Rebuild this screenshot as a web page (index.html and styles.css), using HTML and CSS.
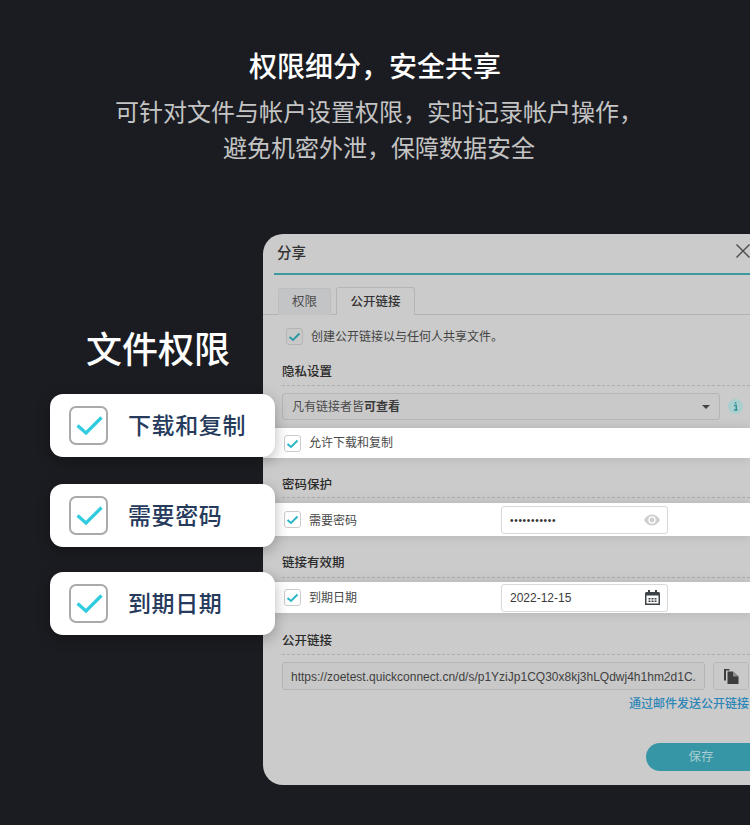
FILE: index.html
```html
<!DOCTYPE html>
<html lang="zh-CN">
<head>
<meta charset="utf-8">
<title>权限细分，安全共享</title>
<link rel="stylesheet" href="styles.css">
</head>
<body>
<main class="page">
  <header class="hero">
    <h1 class="hero-title">权限细分，安全共享</h1>
    <p class="hero-sub">可针对文件与帐户设置权限，实时记录帐户操作，<br>避免机密外泄，保障数据安全</p>
  </header>
  <section class="stage">
    <aside class="callouts">
      <h2 class="callouts-title">文件权限</h2>
      <div class="chip chip-first">
        <svg class="chip-box" viewBox="0 0 39 39"><rect x="1" y="1" width="37" height="37" rx="6" fill="#fff" stroke="#aaa" stroke-width="2"/><path d="M8.500 19.500l8.500 7.500L32.500 11.500" fill="none" stroke="#2fcbdf" stroke-width="3.200"/></svg>
        <span class="chip-text">下载和复制</span>
      </div>
      <div class="chip chip-second">
        <svg class="chip-box" viewBox="0 0 39 39"><rect x="1" y="1" width="37" height="37" rx="6" fill="#fff" stroke="#aaa" stroke-width="2"/><path d="M8.500 19.500l8.500 7.500L32.500 11.500" fill="none" stroke="#2fcbdf" stroke-width="3.200"/></svg>
        <span class="chip-text">需要密码</span>
      </div>
      <div class="chip chip-third">
        <svg class="chip-box" viewBox="0 0 39 39"><rect x="1" y="1" width="37" height="37" rx="6" fill="#fff" stroke="#aaa" stroke-width="2"/><path d="M8.500 19.500l8.500 7.500L32.500 11.500" fill="none" stroke="#2fcbdf" stroke-width="3.200"/></svg>
        <span class="chip-text">到期日期</span>
      </div>
    </aside>
    <div class="dialog">
      <div class="dialog-head">
        <span class="dialog-title">分享</span>
        <svg class="close" viewBox="0 0 16 16"><path d="M1.500 1.500l13 13M14.500 1.500l-13 13" fill="none" stroke="#4a4a4a" stroke-width="1.400"/></svg>
      </div>
      <div class="tabs">
        <span class="tab">权限</span>
        <span class="tab tab-active">公开链接</span>
      </div>
      <label class="create-row">
        <svg class="tick tick-dim" viewBox="0 0 17 17"><rect x=".5" y=".5" width="16" height="16" rx="2.500" fill="#c9c9c9" stroke="#b4b4b4"/><path d="M3.500 9l3.500 3 6.500-6.500" fill="none" stroke="#2d9aa6" stroke-width="2"/></svg>
        <span class="lift">创建公开链接以与任何人共享文件。</span>
      </label>
      <h3 class="section section-privacy">隐私设置</h3>
      <div class="select-row">
        <div class="select"><span class="lift">凡有链接者皆<b>可查看</b></span><i class="caret"></i></div>
        <svg class="info" viewBox="0 0 15 15"><circle cx="7.500" cy="7.500" r="7.500" fill="#a9cfcf"/><path d="M6 6.500h2.300v4.300M6 11h3.500M6.800 4h1.500" fill="none" stroke="#2d8f97" stroke-width="1.300"/></svg>
      </div>
      <div class="band band-download">
        <svg class="tick" viewBox="0 0 17 17"><rect x=".5" y=".5" width="16" height="16" rx="2.500" fill="#fff" stroke="#ccc"/><path d="M3.500 9l3.500 3 6.500-6.500" fill="none" stroke="#2bb6c6" stroke-width="2"/></svg>
        <span class="band-label label-high">允许下载和复制</span>
      </div>
      <h3 class="section section-password">密码保护</h3>
      <div class="band band-password">
        <svg class="tick" viewBox="0 0 17 17"><rect x=".5" y=".5" width="16" height="16" rx="2.500" fill="#fff" stroke="#ccc"/><path d="M3.500 9l3.500 3 6.500-6.500" fill="none" stroke="#2bb6c6" stroke-width="2"/></svg>
        <span class="band-label">需要密码</span>
        <div class="field">
          <span class="dots">•••••••••••</span>
          <svg class="eye" viewBox="0 0 16 12"><path d="M0 6c2-3.600 4.800-5.500 8-5.500S14 2.400 16 6c-2 3.600-4.800 5.500-8 5.500S2 9.600 0 6z" fill="#cfcfcf"/><circle cx="8" cy="6" r="3.700" fill="#fff"/><circle cx="8" cy="6" r="2.400" fill="#cfcfcf"/></svg>
        </div>
      </div>
      <h3 class="section section-expiry">链接有效期</h3>
      <div class="band band-expiry">
        <svg class="tick" viewBox="0 0 17 17"><rect x=".5" y=".5" width="16" height="16" rx="2.500" fill="#fff" stroke="#ccc"/><path d="M3.500 9l3.500 3 6.500-6.500" fill="none" stroke="#2bb6c6" stroke-width="2"/></svg>
        <span class="band-label lift">到期日期</span>
        <div class="field">
          <span class="date">2022-12-15</span>
          <svg class="calendar" viewBox="0 0 15 15"><path d="M3 0h2v2h5V0h2v2h1.500A1.500 1.500 0 0 1 15 3.500V15H0V3.500A1.500 1.500 0 0 1 1.500 2H3z" fill="#3d4246"/><rect x="1.500" y="5.500" width="12" height="8" fill="#fff"/><path d="M3.500 8h2v1.500h-2zM6.500 8h2v1.500h-2zM9.500 8h2v1.500h-2zM3.500 10.500h2V12h-2zM6.500 10.500h2V12h-2zM9.500 10.500h2V12h-2z" fill="#3d4246"/></svg>
        </div>
      </div>
      <h3 class="section section-link">公开链接</h3>
      <div class="link-row">
        <div class="url">https://zoetest.quickconnect.cn/d/s/p1YziJp1CQ30x8kj3hLQdwj4h1hm2d1C.</div>
        <div class="copy">
          <svg class="copy-icon" viewBox="0 0 15 15"><path d="M0 0h5.500v1.500H2V11.500H0z" fill="#3c3c3c"/><path d="M3.500 2.500H9l5.500 5V15h-11z" fill="#3c3c3c"/><path d="M9 2.500v5h5.500z" fill="#8d8d8d"/></svg>
        </div>
      </div>
      <div class="mail-row">通过邮件发送公开链接</div>
      <div class="foot"><span class="save">保存</span></div>
    </div>
  </section>
</main>
</body>
</html>
```
FILE: styles.css
```css
* { box-sizing: border-box; }
html, body { margin: 0; padding: 0; }
body {
  width: 750px;
  height: 825px;
  overflow: hidden;
  background: #1b1c21;
  font-family: "Noto Sans CJK SC", "Noto Sans", sans-serif;
}
.page { width: 750px; height: 825px; overflow: hidden; }

.hero { height: 234px; padding-top: 45px; text-align: center; }
.hero-title {
  margin: 0;
  height: 40px;
  font-size: 28px;
  line-height: 40px;
  font-weight: 500;
  color: #fff;
}
.hero-sub {
  margin: 8px 0 0;
  padding-left: 8px;
  font-size: 24px;
  line-height: 36px;
  font-weight: 400;
  color: #c4c4c4;
}

.stage { display: flex; align-items: flex-start; }
.callouts {
  position: relative;
  z-index: 2;
  flex: none;
  width: 275px;
  margin-right: -12px;
  padding: 90px 0 0 50px;
}
.callouts-title {
  margin: 0;
  width: 216px;
  height: 46px;
  text-align: center;
  font-size: 36px;
  line-height: 46px;
  font-weight: 500;
  color: #fff;
}
.chip {
  display: flex;
  align-items: center;
  width: 225px;
  height: 63px;
  padding-left: 19px;
  background: #fff;
  border-radius: 13px;
  box-shadow: 0 4px 14px rgba(0, 0, 0, .28);
  font-size: 23px;
  font-weight: 500;
  letter-spacing: .6px;
  color: #263a5c;
}
.chip-first { margin-top: 24px; }
.chip-second { margin-top: 27px; }
.chip-third { margin-top: 25px; }
.chip-box { width: 39px; height: 39px; flex: none; margin-right: 20px; }
.chip-text { padding-bottom: 4px; }
.lift { padding-bottom: 2px; }

.dialog {
  flex: none;
  width: 487px;
  height: 551px;
  overflow: hidden;
  background: #cbcbcb;
  border-radius: 20px 0 0 20px;
  color: #333;
}
.dialog-head {
  display: flex;
  align-items: center;
  justify-content: space-between;
  height: 41px;
  margin-left: 11px;
  padding: 0 0 5px 3px;
  border-bottom: 2px solid #3f9a9f;
}
.dialog-title { font-size: 14.500px; font-weight: 500; color: #333; }
.close { width: 16px; height: 16px; margin-right: -1px; }

.tabs {
  display: flex;
  align-items: flex-end;
  gap: 5px;
  height: 40px;
  margin-left: 0;
  padding-left: 15px;
  border-bottom: 1px solid #b3b3b3;
}
.tab {
  width: 53px;
  height: 27px;
  margin-bottom: -1px;
  text-align: center;
  font-size: 12.500px;
  line-height: 24px;
  color: #4c4c4c;
  background: #c3c4c6;
  border: 1px solid #bdbdbd;
  border-bottom: 0;
  border-radius: 3px 3px 0 0;
}
.tab-active {
  width: 79px;
  height: 28px;
  font-weight: 500;
  line-height: 25px;
  color: #333;
  background: #cbcbcb;
  border-color: #b5b5b5;
}

.create-row {
  display: flex;
  align-items: center;
  gap: 8px;
  height: 17px;
  margin: 13px 0 0 23px;
  font-size: 12px;
  color: #444;
}
.tick { flex: none; width: 17px; height: 17px; }

.section {
  height: 24px;
  margin: 0 0 0 19px;
  border-bottom: 1px dashed #aeaeae;
  font-size: 12.500px;
  line-height: 18px;
  font-weight: 500;
  color: #2a2a2a;
}
.section-privacy { margin-top: 17px; }
.section-password { margin-top: 17px; height: 23px; }
.section-expiry { margin-top: 17px; height: 25px; }
.section-link { margin-top: 18px; }

.select-row { display: flex; align-items: center; gap: 8px; margin: 7px 0 0 19px; }
.select {
  display: flex;
  align-items: center;
  justify-content: space-between;
  width: 438px;
  height: 27px;
  padding: 0 9px 0 9px;
  border: 1px solid #b5b5b5;
  border-radius: 3px;
  background: #c9c9c9;
  font-size: 12px;
  color: #4a4a4a;
}
.select b { font-weight: 700; color: #3a3a3a; }
.caret {
  width: 0;
  height: 0;
  border-left: 4px solid transparent;
  border-right: 4px solid transparent;
  border-top: 4px solid #444;
}
.info { width: 15px; height: 15px; flex: none; }

.band {
  display: flex;
  align-items: center;
  background: #fff;
  padding-left: 21px;
  box-shadow: 0 0 12px rgba(0, 0, 0, .12);
  font-size: 12px;
  color: #4a4a4a;
}
.band-download { height: 30px; margin-top: 8px; }
.band-password { height: 33px; margin-top: 5px; }
.band-expiry { height: 31px; margin-top: 4px; }
.band-label { margin-left: 8px; width: 192px; flex: none; }
.label-high { padding-bottom: 4px; }
.field {
  display: flex;
  align-items: center;
  justify-content: space-between;
  width: 167px;
  height: 28px;
  padding: 0 7px 0 8px;
  background: #fff;
  border: 1px solid #d9d9d9;
  border-radius: 3px;
}
.dots { padding-top: 1px; font-family: "Liberation Sans", sans-serif; font-size: 10px; letter-spacing: .7px; color: #333; }
.date { padding-top: 1px; font-family: "Liberation Sans", sans-serif; font-size: 12px; color: #3a3a3a; }
.eye { width: 16px; height: 12px; }
.calendar { width: 15px; height: 15px; }

.link-row { display: flex; gap: 8px; margin: 7px 0 0 19px; }
.url {
  width: 423px;
  height: 28px;
  padding: 0 8px 0 8px;
  overflow: hidden;
  white-space: nowrap;
  border: 1px solid #b5b5b5;
  border-radius: 3px;
  background: #c8c8c8;
  font-family: "Liberation Sans", sans-serif;
  font-size: 12px;
  line-height: 28px;
  color: #3f3f3f;
}
.copy {
  display: flex;
  align-items: center;
  justify-content: center;
  width: 36px;
  height: 28px;
  border: 1px solid #b9b9b9;
  border-radius: 3px;
  background: #c9c9c9;
}
.copy-icon { width: 15px; height: 15px; }
.mail-row {
  margin-top: 4px;
  height: 18px;
  padding-right: 1px;
  text-align: right;
  font-size: 12px;
  line-height: 18px;
  font-weight: 500;
  color: #2c86b8;
}
.foot { display: flex; justify-content: flex-end; margin-top: 31px; }
.save {
  width: 104px;
  height: 28px;
  text-align: center;
  padding-left: 6px;
  border-radius: 14px 0 0 14px;
  background: #3796a5;
  font-size: 12.500px;
  line-height: 26px;
  color: #a9cdd2;
}
```
